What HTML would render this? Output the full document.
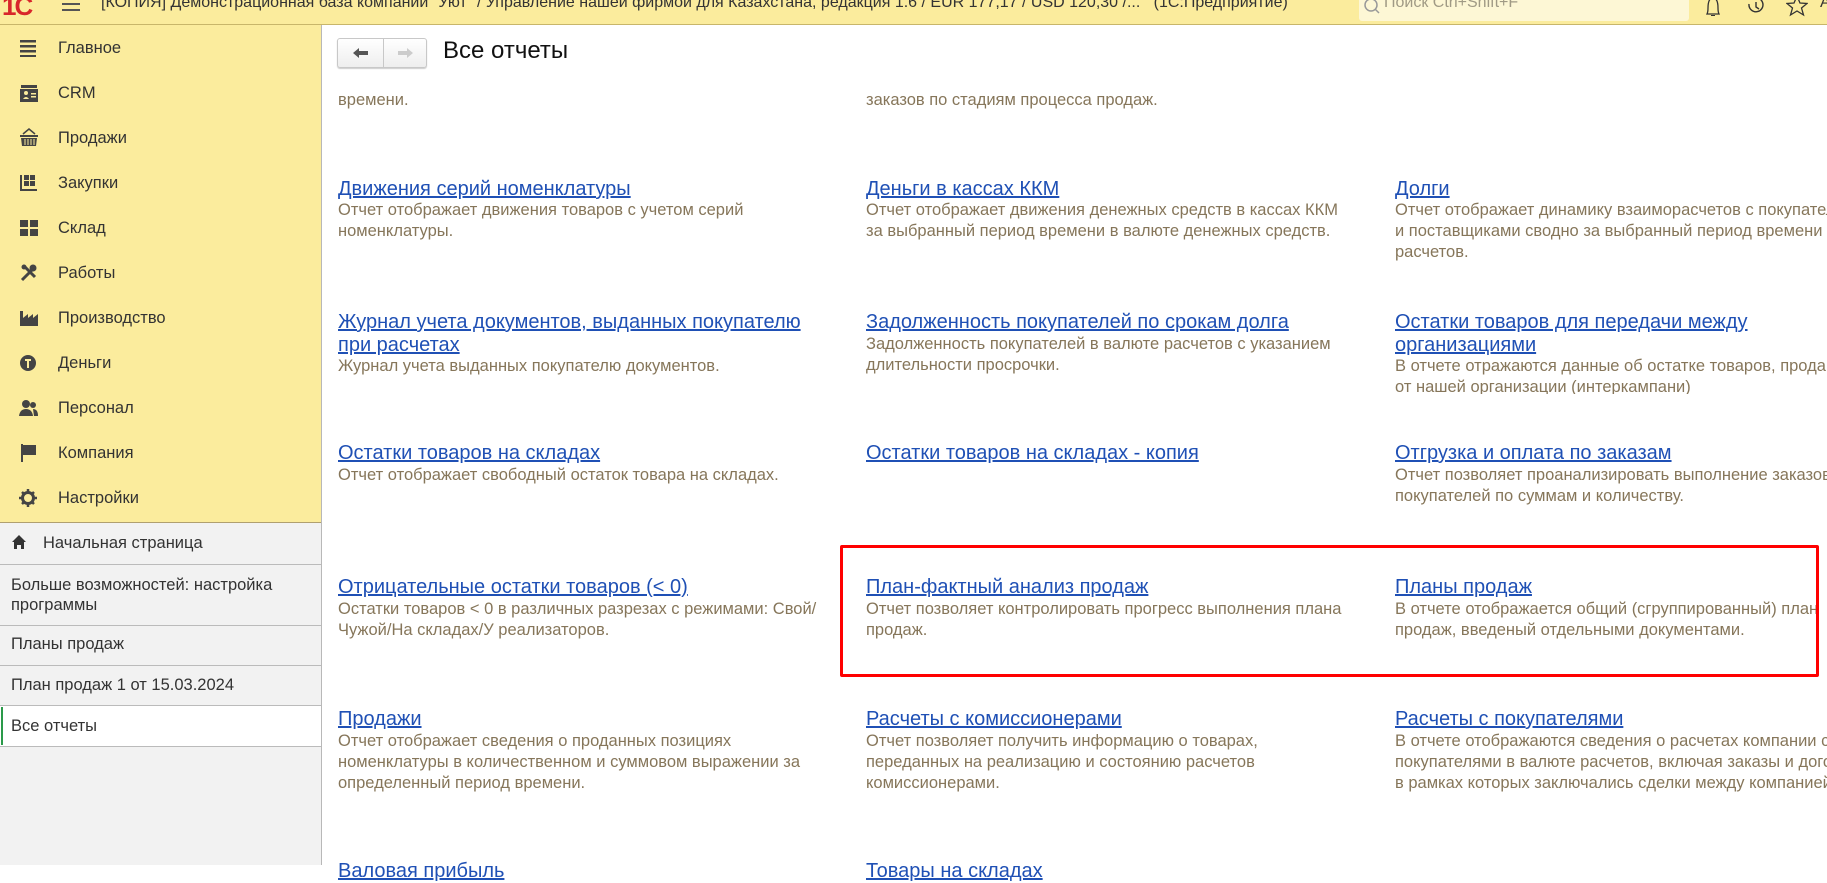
<!DOCTYPE html>
<html><head><meta charset="utf-8"><style>
*{margin:0;padding:0;box-sizing:border-box}
body{width:1827px;height:865px;overflow:hidden;position:relative;background:#fff;font-family:"Liberation Sans",Arial,sans-serif;}
.a{position:absolute;white-space:nowrap}
#top{position:absolute;left:0;top:0;width:1827px;height:25px;background:#fbec9d;border-bottom:1px solid #c8b66a;overflow:hidden}
#side{position:absolute;left:0;top:25px;width:322px;height:840px;background:#f2f2f2;border-right:1px solid #b8b8b8}
#yel{position:absolute;left:0;top:0;width:321px;height:498px;background:#fbec9d;border-bottom:1px solid #b0a070}
.mi{position:absolute;left:58px;font-size:16.5px;color:#333;line-height:20px}
.ic{position:absolute;left:19px}
.li{position:absolute;left:0;width:321px;border-top:1px solid #bbb}
.si{position:absolute;left:11px;font-size:16.5px;color:#333;line-height:20px}
.l{position:absolute;white-space:nowrap;font-size:20px;color:#1f50b5;text-decoration:underline;line-height:23px}
.d{position:absolute;white-space:nowrap;font-size:16.5px;color:#86765a;line-height:21px}
</style></head><body>
<div id="top">
 <div class="a" style="left:2px;top:-9px;font-size:26px;font-weight:bold;color:#d8262b;letter-spacing:-2px">1С</div>
 <div class="a" style="left:62px;top:3px;width:18px;height:2px;background:#555"></div>
 <div class="a" style="left:62px;top:9px;width:18px;height:2px;background:#555"></div>
 <div class="a" style="left:101px;top:-6px;font-size:16px;color:#333">[КОПИЯ] Демонстрационная база компании "Уют" / Управление нашей фирмой для Казахстана, редакция 1.6 / EUR 177,17 / USD 120,30 /...&nbsp;&nbsp;&nbsp;(1С:Предприятие)</div>
 <div class="a" style="left:1359px;top:0;width:330px;height:21px;background:#fdf7d5;border-radius:0 0 3px 3px"></div>
 <svg class="a" style="left:1362px;top:-3px" width="20" height="20"><circle cx="9" cy="8" r="6" fill="none" stroke="#999" stroke-width="1.5"/><line x1="13" y1="12" x2="17" y2="16" stroke="#999" stroke-width="1.5"/></svg>
 <div class="a" style="left:1384px;top:-6px;font-size:16px;color:#a09a85">Поиск Ctrl+Shift+F</div>
 <svg class="a" style="left:1703px;top:0" width="20" height="22"><path d="M4 14 Q5 12 5 8 Q5 -2 10 -2 Q15 -2 15 8 Q15 12 16 14 Z" fill="none" stroke="#333" stroke-width="1.3"/><path d="M8 15 h4 v1 h-4z" fill="#333"/></svg>
 <svg class="a" style="left:1745px;top:-4px" width="22" height="22"><path d="M4 8 A7 7 0 1 0 7 3" fill="none" stroke="#333" stroke-width="1.4"/><path d="M11 6 v5 l3 2" fill="none" stroke="#333" stroke-width="1.4"/></svg>
 <svg class="a" style="left:1786px;top:-5px" width="22" height="22"><path d="M11 1 l3 7 7 .5 -5.5 4.5 2 7 -6.5-4 -6.5 4 2-7 -5.5-4.5 7-.5z" fill="none" stroke="#333" stroke-width="1.3"/></svg>
 <div class="a" style="left:1820px;top:-6px;font-size:16px;color:#333">А</div>
</div>
<div id="side">
 <div id="yel">
  <svg class="ic" style="top:13px" width="20" height="20"><g fill="#444"><rect x="1" y="2" width="16" height="2.5"/><rect x="1" y="7" width="16" height="2.5"/><rect x="1" y="12" width="16" height="2.5"/><rect x="1" y="17" width="16" height="2"/></g></svg>
  <div class="mi" style="top:13px">Главное</div>
  <svg class="ic" style="top:58px" width="20" height="20"><path d="M2 2h16v3H2zM1 6h18v13H1z" fill="#444"/><circle cx="7" cy="10" r="2" fill="#fbec9d"/><path d="M4 16 q3-4 6 0z M12 10h5v1.5h-5zM12 13h5v1.5h-5z" fill="#fbec9d"/></svg>
  <div class="mi" style="top:58px">CRM</div>
  <svg class="ic" style="top:103px" width="20" height="20"><path d="M4 6 L10 1 L16 6" fill="none" stroke="#444" stroke-width="1.5"/><path d="M1 7h18v2H1zM2 10h16l-1 8H3z" fill="#444"/><path d="M6 11v6M9 11v6M12 11v6M15 11v6" stroke="#fbec9d" stroke-width="1"/></svg>
  <div class="mi" style="top:103px">Продажи</div>
  <svg class="ic" style="top:148px" width="20" height="20"><path d="M1 2h2v14h15v2H1z M5 2h5v5H5zM11 2h5v5h-5zM5 8h5v5H5zM11 8h5v5h-5z" fill="#444"/></svg>
  <div class="mi" style="top:148px">Закупки</div>
  <svg class="ic" style="top:193px" width="20" height="20"><path d="M1 2h8v7H1zM11 2h8v7h-8zM1 11h8v7H1zM11 11h8v7h-8z" fill="#444"/></svg>
  <div class="mi" style="top:193px">Склад</div>
  <svg class="ic" style="top:238px" width="20" height="20"><path d="M3 17 L13 7 M6 4 L16 14" stroke="#444" stroke-width="3"/><circle cx="14" cy="5" r="3.5" fill="#444"/><circle cx="5" cy="4" r="2.5" fill="#444"/></svg>
  <div class="mi" style="top:238px">Работы</div>
  <svg class="ic" style="top:283px" width="20" height="20"><path d="M1 18V3h3v7l5-4v4l5-4v4l5-4v12z" fill="#444"/></svg>
  <div class="mi" style="top:283px">Производство</div>
  <svg class="ic" style="top:328px" width="20" height="20"><circle cx="9" cy="10" r="8" fill="#444"/><path d="M6 6h6v2H10v7H8V8H6z" fill="#fbec9d"/></svg>
  <div class="mi" style="top:328px">Деньги</div>
  <svg class="ic" style="top:373px" width="20" height="20"><circle cx="7" cy="6" r="4" fill="#444"/><path d="M0 18q1-7 7-7t7 7z" fill="#444"/><circle cx="14" cy="7" r="3" fill="#444"/><path d="M14 11q5 0 5 7h-4z" fill="#444"/></svg>
  <div class="mi" style="top:373px">Персонал</div>
  <svg class="ic" style="top:418px" width="20" height="20"><path d="M2 1h2v18H2z M4 2h13v10H4z" fill="#444"/></svg>
  <div class="mi" style="top:418px">Компания</div>
  <svg class="ic" style="top:463px" width="20" height="20"><circle cx="9" cy="10" r="5.5" fill="none" stroke="#444" stroke-width="3"/><path d="M9 1v4M9 15v4M0 10h4M14 10h4M3 4l3 3M12 13l3 3M15 4l-3 3M3 16l3-3" stroke="#444" stroke-width="2.5"/></svg>
  <div class="mi" style="top:463px">Настройки</div>
 </div>
 <svg class="a" style="left:11px;top:509px" width="18" height="16"><path d="M1 8 L8 1 L15 8 H13 V15 H10 V11 H6 V15 H3 V8z" fill="#333"/></svg>
 <div class="si" style="left:43px;top:508px">Начальная страница</div>
 <div class="li" style="top:539px"></div>
 <div class="si" style="top:550px">Больше возможностей: настройка<br>программы</div>
 <div class="li" style="top:600px"></div>
 <div class="si" style="top:609px">Планы продаж</div>
 <div class="li" style="top:640px"></div>
 <div class="si" style="top:650px">План продаж 1 от 15.03.2024</div>
 <div class="li" style="top:680px"></div>
 <div class="a" style="left:0;top:681px;width:321px;height:40px;background:#fff"></div>
 <div class="a" style="left:1px;top:682px;width:2px;height:38px;background:#2a9a4a"></div>
 <div class="si" style="top:691px">Все отчеты</div>
 <div class="li" style="top:721px"></div>
</div>

<div class="a" style="left:337px;top:38px;width:90px;height:30px;border:1px solid #c8c8c8;border-radius:3px;background:linear-gradient(#fff,#eee);box-shadow:0 1px 1px #ccc"></div>
<div class="a" style="left:383px;top:38px;width:1px;height:30px;background:#c8c8c8"></div>
<svg class="a" style="left:351px;top:45px" width="20" height="16"><path d="M2 8 L8 3 V6 H17 V10 H8 V13z" fill="#555"/></svg>
<svg class="a" style="left:395px;top:45px" width="20" height="16"><path d="M18 8 L12 3 V6 H3 V10 H12 V13z" fill="#ccc"/></svg>
<div class="a" style="left:443px;top:37px;font-size:24px;color:#111">Все отчеты</div>

<div class="d" style="left:338px;top:90px">времени.</div>
<div class="d" style="left:866px;top:90px">заказов по стадиям процесса продаж.</div>

<div class="l" style="left:338px;top:178px">Движения серий номенклатуры</div>
<div class="d" style="left:338px;top:200px">Отчет отображает движения товаров с учетом серий<br>номенклатуры.</div>
<div class="l" style="left:866px;top:178px">Деньги в кассах ККМ</div>
<div class="d" style="left:866px;top:200px">Отчет отображает движения денежных средств в кассах ККМ<br>за выбранный период времени в валюте денежных средств.</div>
<div class="l" style="left:1395px;top:178px">Долги</div>
<div class="d" style="left:1395px;top:200px">Отчет отображает динамику взаиморасчетов с покупателями<br>и поставщиками сводно за выбранный период времени<br>расчетов.</div>

<div class="l" style="left:338px;top:311px">Журнал учета документов, выданных покупателю <br>при расчетах</div>
<div class="d" style="left:338px;top:356px">Журнал учета выданных покупателю документов.</div>
<div class="l" style="left:866px;top:311px">Задолженность покупателей по срокам долга</div>
<div class="d" style="left:866px;top:334px">Задолженность покупателей в валюте расчетов с указанием<br>длительности просрочки.</div>
<div class="l" style="left:1395px;top:311px">Остатки товаров для передачи между <br>организациями</div>
<div class="d" style="left:1395px;top:356px;height:38px;overflow:hidden">В отчете отражаются данные об остатке товаров, продаваемых<br>от нашей организации (интеркампани)</div>

<div class="l" style="left:338px;top:442px">Остатки товаров на складах</div>
<div class="d" style="left:338px;top:465px">Отчет отображает свободный остаток товара на складах.</div>
<div class="l" style="left:866px;top:442px">Остатки товаров на складах - копия</div>
<div class="l" style="left:1395px;top:442px">Отгрузка и оплата по заказам</div>
<div class="d" style="left:1395px;top:465px">Отчет позволяет проанализировать выполнение заказов<br>покупателей по суммам и количеству.</div>

<div class="l" style="left:338px;top:576px">Отрицательные остатки товаров (&lt; 0)</div>
<div class="d" style="left:338px;top:599px">Остатки товаров &lt; 0 в различных разрезах с режимами: Свой/<br>Чужой/На складах/У реализаторов.</div>
<div class="l" style="left:866px;top:576px">План-фактный анализ продаж</div>
<div class="d" style="left:866px;top:599px">Отчет позволяет контролировать прогресс выполнения плана<br>продаж.</div>
<div class="l" style="left:1395px;top:576px">Планы продаж</div>
<div class="d" style="left:1395px;top:599px">В отчете отображается общий (сгруппированный) план<br>продаж, введеный отдельными документами.</div>
<div class="a" style="left:840px;top:545px;width:979px;height:132px;border:3px solid #f00;border-radius:2px"></div>

<div class="l" style="left:338px;top:708px">Продажи</div>
<div class="d" style="left:338px;top:731px">Отчет отображает сведения о проданных позициях<br>номенклатуры в количественном и суммовом выражении за<br>определенный период времени.</div>
<div class="l" style="left:866px;top:708px">Расчеты с комиссионерами</div>
<div class="d" style="left:866px;top:731px">Отчет позволяет получить информацию о товарах,<br>переданных на реализацию и состоянию расчетов<br>комиссионерами.</div>
<div class="l" style="left:1395px;top:708px">Расчеты с покупателями</div>
<div class="d" style="left:1395px;top:731px">В отчете отображаются сведения о расчетах компании с<br>покупателями в валюте расчетов, включая заказы и договоры<br>в рамках которых заключались сделки между компанией</div>

<div class="l" style="left:338px;top:860px">Валовая прибыль</div>
<div class="l" style="left:866px;top:860px">Товары на складах</div>
</body></html>
